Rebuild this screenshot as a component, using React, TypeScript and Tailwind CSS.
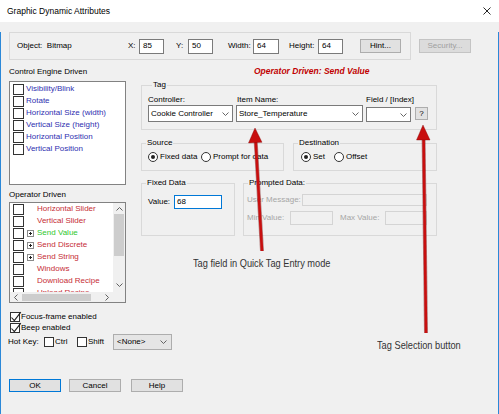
import React from "react";

function Box({ className = "", checked = false }: { className?: string; checked?: boolean }) {
  return (
    <span className={`relative shrink-0 border border-[#333] bg-white ${className}`}>
      {checked && (
        <svg className="absolute left-[-1px] top-[-2px] w-[12px] h-[12px]" viewBox="0 0 12 12">
          <path d="M1.5 6.5 L4.3 9.6 L10.8 1.2" fill="none" stroke="#222" strokeWidth="1.1" />
        </svg>
      )}
    </span>
  );
}

function Radio({ checked = false }: { checked?: boolean }) {
  return (
    <span className="w-[10px] h-[10px] shrink-0 rounded-full border border-[#333] bg-white flex items-center justify-center">
      {checked && <span className="w-[4px] h-[4px] rounded-full bg-[#222]" />}
    </span>
  );
}

function Chevron({ className = "" }: { className?: string }) {
  return (
    <svg className={`w-[7px] h-[4px] shrink-0 ${className}`} viewBox="0 0 7 4">
      <path d="M0.5 0.5 L3.5 3.5 L6.5 0.5" fill="none" stroke="#555" strokeWidth="0.9" />
    </svg>
  );
}

function Expand() {
  return (
    <svg className="w-[7px] h-[7px] shrink-0" viewBox="0 0 7 7">
      <rect x="0.5" y="0.5" width="6" height="6" fill="#fff" stroke="#8a8a8a" strokeWidth="1" />
      <path d="M2 3.5 H5 M3.5 2 V5" stroke="#222" strokeWidth="1" />
    </svg>
  );
}

const controlItems = [
  "Visibility/Blink",
  "Rotate",
  "Horizontal Size (width)",
  "Vertical Size (height)",
  "Horizontal Position",
  "Vertical Position",
];

const operatorItems = [
  { label: "Horizontal Slider", green: false, tree: false },
  { label: "Vertical Slider", green: false, tree: false },
  { label: "Send Value", green: true, tree: true },
  { label: "Send Discrete", green: false, tree: true },
  { label: "Send String", green: false, tree: true },
  { label: "Windows", green: false, tree: false },
  { label: "Download Recipe", green: false, tree: false },
  { label: "Upload Recipe", green: false, tree: false },
];

export default function App() {
  return (
    <div className="relative w-[499px] h-[414px] bg-[#f0f0f0] text-[8px] leading-[10px] text-black whitespace-nowrap font-['Liberation_Sans',Arial,sans-serif] overflow-hidden">
      {/* title bar */}
      <div className="h-[22px] bg-white flex items-center justify-between pl-[7px] pr-[8px]">
        <span className="text-[8.5px]">Graphic Dynamic Attributes</span>
        <svg className="w-[8px] h-[8px]" viewBox="0 0 8 8">
          <path d="M0.5 0.5 L7.5 7.5 M7.5 0.5 L0.5 7.5" stroke="#111" strokeWidth="0.9" />
        </svg>
      </div>

      <div className="h-[392px] border-x border-b border-[#2b88d8]">
        {/* object row */}
        <div className="flex items-center mt-[10px] ml-[8px]">
          <div className="w-[402px] h-[28px] border border-[#d9d9d9] flex items-center pl-[7px]">
            <span className="w-[111px]">Object:&nbsp; Bitmap</span>
            <span className="w-[11px]">X:</span>
            <span className="w-[25px] h-[15px] border border-[#7a7a7a] bg-white pl-[3px] flex items-center">85</span>
            <span className="ml-[12px] w-[12px]">Y:</span>
            <span className="w-[25px] h-[15px] border border-[#7a7a7a] bg-white pl-[3px] flex items-center">50</span>
            <span className="ml-[15px] w-[25px]">Width:</span>
            <span className="w-[26px] h-[15px] border border-[#7a7a7a] bg-white pl-[3px] flex items-center">64</span>
            <span className="ml-[10px] w-[29px]">Height:</span>
            <span className="w-[25px] h-[15px] border border-[#7a7a7a] bg-white pl-[3px] flex items-center">64</span>
            <span className="ml-[17px] w-[41px] h-[14px] border border-[#adadad] bg-[#e1e1e1] flex items-center justify-center">
              Hint...
            </span>
          </div>
          <span className="ml-[8px] w-[52px] h-[14px] border border-[#c4c4c4] bg-[#dcdcdc] text-[#a0a0a0] flex items-center justify-center">
            Security...
          </span>
        </div>

        {/* middle */}
        <div className="flex ml-[8px]">
          <div className="w-[117px]">
            <div className="h-[21px] pt-[7px]">Control Engine Driven</div>
            <div className="h-[104px] border border-[#828282] bg-white pt-[1px] pl-[3px]">
              {controlItems.map((t) => (
                <div key={t} className="h-[12px] flex items-center">
                  <Box className="w-[11px] h-[11px]" />
                  <span className="ml-[2px] text-[#2f2fb0]">{t}</span>
                </div>
              ))}
            </div>
            <div className="h-[17px] pt-[5px]">Operator Driven</div>
            <div className="h-[101px] border border-[#828282] bg-white flex flex-col">
              <div className="flex h-[89px]">
                <div className="flex-1 overflow-hidden pl-[3px]">
                  {operatorItems.map((it) => (
                    <div key={it.label} className="h-[12px] flex items-center">
                      <Box className="w-[11px] h-[11px]" />
                      <span className="w-[13px] flex justify-center">{it.tree && <Expand />}</span>
                      <span className={it.green ? "text-[#2ec82e]" : "text-[#c62d36]"}>{it.label}</span>
                    </div>
                  ))}
                </div>
                <div className="w-[12px] bg-[#f0f0f0] flex flex-col items-center">
                  <svg className="mt-[4px] w-[7px] h-[4px]" viewBox="0 0 7 4">
                    <path d="M0.5 3.5 L3.5 0.5 L6.5 3.5" fill="none" stroke="#606060" strokeWidth="1" />
                  </svg>
                  <div className="mt-[3px] w-[10px] h-[42px] bg-[#cdcdcd]" />
                  <svg className="mt-[27px] w-[7px] h-[4px]" viewBox="0 0 7 4">
                    <path d="M0.5 0.5 L3.5 3.5 L6.5 0.5" fill="none" stroke="#606060" strokeWidth="1" />
                  </svg>
                </div>
              </div>
              <div className="flex h-[10px]">
                <div className="flex-1 bg-[#f0f0f0] flex items-center">
                  <svg className="ml-[4px] w-[4px] h-[7px]" viewBox="0 0 4 7">
                    <path d="M3.5 0.5 L0.5 3.5 L3.5 6.5" fill="none" stroke="#606060" strokeWidth="1" />
                  </svg>
                  <div className="ml-[4px] w-[69px] h-[7px] bg-[#cdcdcd]" />
                  <svg className="ml-[14px] w-[4px] h-[7px]" viewBox="0 0 4 7">
                    <path d="M0.5 0.5 L3.5 3.5 L0.5 6.5" fill="none" stroke="#606060" strokeWidth="1" />
                  </svg>
                </div>
                <div className="w-[12px] bg-[#f0f0f0]" />
              </div>
            </div>
          </div>

          <div className="ml-[15px] w-[296px]">
            <div className="h-[20px] pt-[6px] pl-[113px] text-[8.5px] font-bold italic text-[#c00000]">
              Operator Driven: Send Value
            </div>

            <fieldset className="h-[50px] border border-[#d9d9d9] pl-[6px]">
              <legend className="ml-[4px] px-[1px] leading-[10px]">Tag</legend>
              <div className="flex h-[15px] pt-[5px]">
                <span className="w-[85px]">Controller:</span>
                <span className="ml-[3px] w-[127px] pl-[1px]">Item Name:</span>
                <span className="ml-[3px] w-[60px]">Field / [Index]</span>
              </div>
              <div className="flex items-end h-[17px]">
                <div className="w-[85px] h-[17px] border border-[#7a7a7a] bg-white flex items-center justify-between pl-[2px] pr-[3px]">
                  <span>Cookie Controller</span>
                  <Chevron />
                </div>
                <div className="ml-[3px] w-[127px] h-[17px] border border-[#7a7a7a] bg-white flex items-center justify-between pl-[2px] pr-[3px]">
                  <span>Store_Temperature</span>
                  <Chevron />
                </div>
                <div className="ml-[3px] w-[45px] h-[15px] border border-[#7a7a7a] bg-white flex items-center justify-end pr-[3px]">
                  <Chevron />
                </div>
                <div className="ml-[4px] mb-[2px] w-[13px] h-[13px] border border-[#adadad] bg-[#e1e1e1] flex items-center justify-center">
                  ?
                </div>
              </div>
            </fieldset>

            <div className="flex mt-[8px]">
              <fieldset className="w-[143px] h-[33px] border border-[#d9d9d9]">
                <legend className="ml-[4px] px-[1px] leading-[10px]">Source</legend>
                <div className="mt-[2px] h-[14px] flex items-center pl-[6px]">
                  <Radio checked />
                  <span className="ml-[2px] w-[41px]">Fixed data</span>
                  <Radio />
                  <span className="ml-[2px]">Prompt for data</span>
                </div>
              </fieldset>
              <fieldset className="ml-[9px] w-[144px] h-[33px] border border-[#d9d9d9]">
                <legend className="ml-[4px] px-[1px] leading-[10px]">Destination</legend>
                <div className="mt-[2px] h-[14px] flex items-center pl-[7px]">
                  <Radio checked />
                  <span className="ml-[2px] w-[21px]">Set</span>
                  <Radio />
                  <span className="ml-[2px]">Offset</span>
                </div>
              </fieldset>
            </div>

            <div className="flex mt-[7px]">
              <fieldset className="w-[94px] h-[58px] border border-[#d9d9d9]">
                <legend className="ml-[4px] px-[1px] leading-[10px]">Fixed Data</legend>
                <div className="mt-[7px] h-[14px] flex items-center pl-[6px]">
                  <span className="w-[26px]">Value:</span>
                  <span className="w-[48px] h-[14px] border border-[#0078d7] bg-white pl-[2px] flex items-center">68</span>
                </div>
              </fieldset>
              <fieldset className="ml-[8px] w-[194px] h-[58px] border border-[#d9d9d9]">
                <legend className="ml-[4px] px-[1px] leading-[10px]">Prompted Data:</legend>
                <div className="mt-[5px] h-[13px] flex items-center pl-[3px] text-[#a6a6a6]">
                  <span className="w-[55px]">User Message:</span>
                  <span className="w-[125px] h-[12px] border border-[#d4d4d4]" />
                </div>
                <div className="mt-[5px] h-[14px] flex items-center pl-[3px] text-[#a6a6a6]">
                  <span className="w-[43px]">Min Value:</span>
                  <span className="w-[43px] h-[14px] border border-[#d4d4d4]" />
                  <span className="ml-[7px] w-[45px]">Max Value:</span>
                  <span className="w-[42px] h-[14px] border border-[#d4d4d4]" />
                </div>
              </fieldset>
            </div>
          </div>
        </div>

        {/* bottom options */}
        <div className="mt-[8px] ml-[9px] h-[11px] flex items-center">
          <Box className="w-[10px] h-[10px]" checked />
          <span className="ml-[1px]">Focus-frame enabled</span>
        </div>
        <div className="ml-[9px] h-[11px] flex items-center">
          <Box className="w-[10px] h-[10px]" checked />
          <span className="ml-[1px]">Beep enabled</span>
        </div>
        <div className="mt-[1px] ml-[7px] h-[16px] flex items-center">
          <span className="w-[36px]">Hot Key:</span>
          <Box className="w-[10px] h-[10px]" />
          <span className="w-[23px] pl-[1px]">Ctrl</span>
          <Box className="w-[10px] h-[10px]" />
          <span className="ml-[1px] w-[25px]">Shift</span>
          <div className="w-[59px] h-[16px] border border-[#adadad] bg-[#e5e5e5] flex items-center justify-between pl-[3px] pr-[4px]">
            <span>&lt;None&gt;</span>
            <Chevron />
          </div>
        </div>

        <div className="mt-[29px] ml-[8px] flex">
          <span className="w-[52px] h-[13px] border border-[#0078d7] bg-[#e1e1e1] flex items-center justify-center">OK</span>
          <span className="ml-[8px] w-[52px] h-[13px] border border-[#adadad] bg-[#e1e1e1] flex items-center justify-center">Cancel</span>
          <span className="ml-[10px] w-[52px] h-[13px] border border-[#adadad] bg-[#e1e1e1] flex items-center justify-center">Help</span>
        </div>
      </div>

      {/* annotations */}
      <svg className="absolute left-0 top-0 w-[499px] h-[414px] pointer-events-none" viewBox="0 0 499 414">
        <g>
          <line x1="262" y1="251" x2="255.6" y2="140" stroke="#6e0000" strokeWidth="4" strokeOpacity="0.45" />
          <line x1="262" y1="251" x2="255.6" y2="140" stroke="#c80f0f" strokeWidth="2.6" />
          <polygon points="255,128 248.5,143 262,142.3" fill="#c80f0f" stroke="#7a0000" strokeWidth="0.6" strokeOpacity="0.6" />
        </g>
        <g>
          <line x1="426" y1="333" x2="423.6" y2="138" stroke="#6e0000" strokeWidth="4" strokeOpacity="0.45" />
          <line x1="426" y1="333" x2="423.6" y2="138" stroke="#c80f0f" strokeWidth="2.6" />
          <polygon points="423,125 416.5,140 430,140" fill="#c80f0f" stroke="#7a0000" strokeWidth="0.6" strokeOpacity="0.6" />
        </g>
      </svg>
      <span className="absolute left-[193px] top-[256px] text-[11px] leading-[14px] text-[#333] origin-left scale-x-[0.84] whitespace-nowrap">
        Tag field in Quick Tag Entry mode
      </span>
      <span className="absolute left-[377px] top-[338px] text-[11px] leading-[14px] text-[#333] origin-left scale-x-[0.84] whitespace-nowrap">
        Tag Selection button
      </span>
    </div>
  );
}
